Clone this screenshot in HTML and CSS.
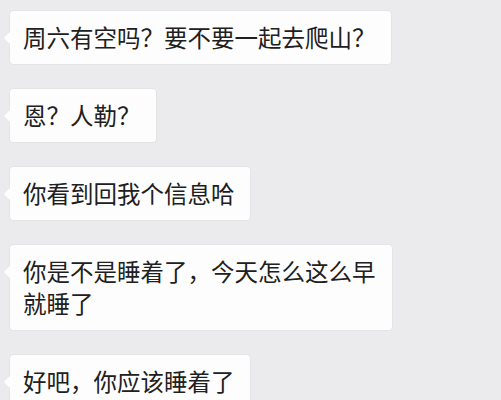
FILE: index.html
```html
<!DOCTYPE html>
<html lang="zh-CN">

<head>
    <meta charset="UTF-8">
    <meta name="viewport" content="width=device-width, initial-scale=1.0">
    <title>聊天记录</title>
    <link rel="stylesheet" href="styles.css">
</head>

<body>

    <div class="chat">
        <div class="msg">
            <div class="bubble">周六有空吗？要不要一起去爬山？</div>
        </div>
        <div class="msg">
            <div class="bubble">恩？人勒？</div>
        </div>
        <div class="msg">
            <div class="bubble">你看到回我个信息哈</div>
        </div>
        <div class="msg">
            <div class="bubble">你是不是睡着了，今天怎么这么早就睡了</div>
        </div>
        <div class="msg">
            <div class="bubble">好吧，你应该睡着了</div>
        </div>
    </div>

</body>

</html>
```

FILE: styles.css
```css
body {
    margin: 0;
    background-color: #ebeaec;
    font-family: "Noto Sans CJK SC", "Noto Sans", sans-serif;
    overflow: hidden;
}

.chat {
    display: flex;
    flex-direction: column;
    gap: 23px;
    padding: 10px 0 0 9px;
}

.msg {
    display: flex;
}

.bubble {
    position: relative;
    max-width: 384px;
    box-sizing: border-box;
    padding: 10px 15px 11px 13px;
    background-color: #fdfdfd;
    border: 1px solid #e4e3e5;
    border-radius: 4px;
    color: #202020;
    font-size: 23.5px;
    line-height: 32px;
}

/* 左侧小三角 */
.bubble::before {
    content: "";
    position: absolute;
    top: 21px;
    left: -6px;
    width: 0;
    height: 0;
    border-top: 6px solid transparent;
    border-bottom: 6px solid transparent;
    border-right: 6px solid #fdfdfd;
}
```
